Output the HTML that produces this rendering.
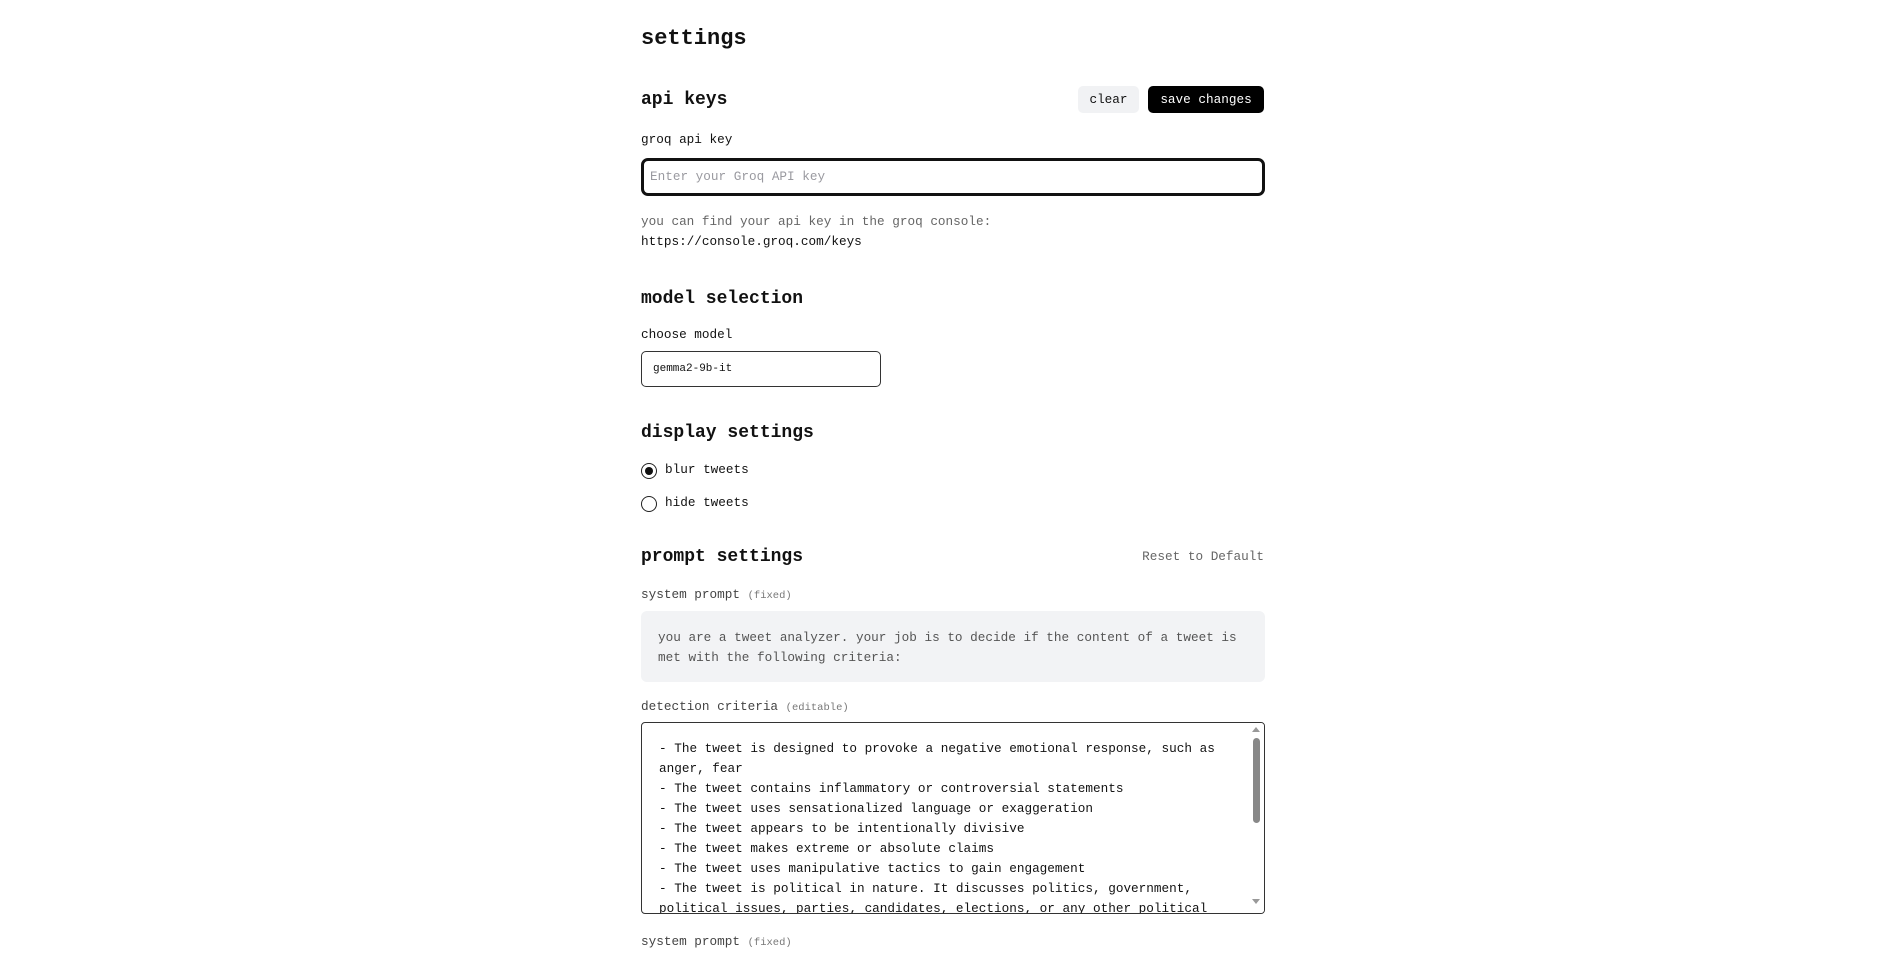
<!DOCTYPE html>
<html><head><meta charset="utf-8"><style>
*{margin:0;padding:0;box-sizing:border-box}
body{width:1904px;height:957px;background:#fff;font-family:"Liberation Mono",monospace;color:#111;position:relative;overflow:hidden;font-size:12.7px}
.a{position:absolute;white-space:nowrap;line-height:1}
h1,h2{position:absolute;font-weight:bold;line-height:1;color:#111}
h1{font-size:22px}
h2{font-size:18px}
.g{color:#666}
.s{font-size:10.5px;color:#777}
</style></head><body>
<h1 style="left:641px;top:28px">settings</h1>

<h2 style="left:641px;top:91px">api keys</h2>
<div class="a" style="left:1078px;top:86px;width:61px;height:27px;background:#f1f2f4;border-radius:5px;text-align:center;line-height:27px">clear</div>
<div class="a" style="left:1148px;top:86px;width:116px;height:27px;background:#000;color:#fff;border-radius:5px;text-align:center;line-height:27px">save changes</div>
<div class="a" style="left:641px;top:134px">groq api key</div>
<div class="a" style="left:641px;top:158px;width:624px;height:38px;border:3px solid #111;border-radius:7px;color:#9a9aa0;padding-left:6px;line-height:32px">Enter your Groq API key</div>
<div class="a g" style="left:641px;top:216px">you can find your api key in the groq console:</div>
<div class="a" style="left:641px;top:236px">https://console.groq.com/keys</div>

<h2 style="left:641px;top:290px">model selection</h2>
<div class="a" style="left:641px;top:329px">choose model</div>
<div class="a" style="left:641px;top:351px;width:240px;height:36px;border:1px solid #333;border-radius:5px;font-size:11px;padding-left:11px;line-height:34px">gemma2-9b-it</div>

<h2 style="left:641px;top:424px">display settings</h2>
<div class="a" style="left:641px;top:463px;width:16px;height:16px;border:1.5px solid #222;border-radius:50%"><div style="position:absolute;left:2.5px;top:2.5px;width:8px;height:8px;border-radius:50%;background:#111"></div></div>
<div class="a" style="left:665px;top:464px">blur tweets</div>
<div class="a" style="left:641px;top:496px;width:16px;height:16px;border:1.5px solid #222;border-radius:50%"></div>
<div class="a" style="left:665px;top:497px">hide tweets</div>

<h2 style="left:641px;top:548px">prompt settings</h2>
<div class="a g" style="right:640px;top:551px">Reset to Default</div>
<div class="a" style="left:641px;top:589px;color:#444">system prompt <span class="s">(fixed)</span></div>
<div class="a" style="left:641px;top:611px;width:624px;height:71px;background:#f2f3f5;border-radius:6px"></div>
<div class="a" style="left:658px;top:628px;color:#555;line-height:20px;white-space:pre">you are a tweet analyzer. your job is to decide if the content of a tweet is
met with the following criteria:</div>
<div class="a" style="left:641px;top:701px;color:#444">detection criteria <span class="s">(editable)</span></div>
<div class="a" style="left:641px;top:722px;width:624px;height:192px;border:1px solid #333;border-radius:4px;overflow:hidden">
<div style="position:absolute;left:17px;top:16px;line-height:20px;white-space:pre;color:#111">- The tweet is designed to provoke a negative emotional response, such as
anger, fear
- The tweet contains inflammatory or controversial statements
- The tweet uses sensationalized language or exaggeration
- The tweet appears to be intentionally divisive
- The tweet makes extreme or absolute claims
- The tweet uses manipulative tactics to gain engagement
- The tweet is political in nature. It discusses politics, government,
political issues, parties, candidates, elections, or any other political</div>
<div style="position:absolute;right:0;top:0;width:15px;height:190px;background:#fff"></div>
<div style="position:absolute;right:4px;top:4px;width:0;height:0;border-left:4px solid transparent;border-right:4px solid transparent;border-bottom:5px solid #999"></div>
<div style="position:absolute;right:4px;top:15px;width:7px;height:85px;background:#888;border-radius:4px"></div>
<div style="position:absolute;right:4px;top:176px;width:0;height:0;border-left:4px solid transparent;border-right:4px solid transparent;border-top:5px solid #999"></div>
</div>
<div class="a" style="left:641px;top:936px;color:#444">system prompt <span class="s">(fixed)</span></div>
</body></html>
